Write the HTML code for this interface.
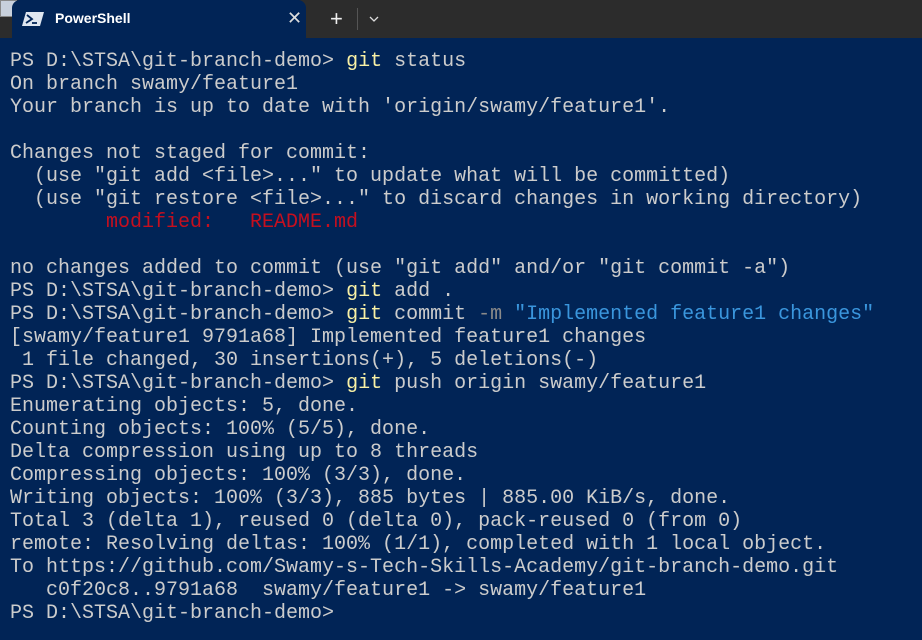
<!DOCTYPE html>
<html><head><style>
body{margin:0;width:922px;height:640px;background:#012456;overflow:hidden;position:relative;font-family:"Liberation Mono",monospace}
.bar{position:absolute;left:0;top:0;width:922px;height:38px;background:#2c2c2c}
.tab{position:absolute;left:12px;top:0;width:294px;height:38px;background:#012456;border-radius:8px 8px 0 0}
.tab span{position:absolute;left:43px;top:10px;font:bold 14px "Liberation Sans",sans-serif;color:#fff}
.x{position:absolute;left:275px;top:8px;color:#ddd;font:18px "Liberation Sans",sans-serif}
pre{position:absolute;left:10px;top:50px;margin:0;font-size:20px;line-height:23px;color:#cccccc;font-family:"Liberation Mono",monospace}
.y{color:#f9f1a5}.r{color:#c50f1f}.b{color:#3a96dd}.g{color:#8a8a8a}
</style></head><body>
<div class="bar"></div>
<div style="position:absolute;left:0;top:0;width:17px;height:17px;background:#c8d0dc;border:1px solid #888;box-sizing:border-box"></div>
<div class="tab">
<svg style="position:absolute;left:10px;top:12px" width="22" height="14" viewBox="0 0 22 14"><path d="M4 0H22L18 14H0Z" fill="#dfe6f0"/><path d="M5 3L10 7L4 11" stroke="#012456" stroke-width="1.8" fill="none"/><path d="M10 11H15" stroke="#012456" stroke-width="1.8"/></svg>
<span>PowerShell</span><div class="x">✕</div></div>
<div style="position:absolute;left:330px;top:6px;color:#eee;font:22px 'Liberation Sans',sans-serif">+</div>
<div style="position:absolute;left:357px;top:8px;width:1px;height:22px;background:#555"></div>
<svg style="position:absolute;left:369px;top:16px" width="10" height="6"><path d="M1 1L5 5L9 1" stroke="#ddd" stroke-width="1.3" fill="none"/></svg>
<pre>PS D:\STSA\git-branch-demo&gt; <span class="y">git</span> status
On branch swamy/feature1
Your branch is up to date with 'origin/swamy/feature1'.

Changes not staged for commit:
  (use "git add &lt;file&gt;..." to update what will be committed)
  (use "git restore &lt;file&gt;..." to discard changes in working directory)
        <span class="r">modified:   README.md</span>

no changes added to commit (use "git add" and/or "git commit -a")
PS D:\STSA\git-branch-demo&gt; <span class="y">git</span> add .
PS D:\STSA\git-branch-demo&gt; <span class="y">git</span> commit <span class="g">-m</span> <span class="b">"Implemented feature1 changes"</span>
[swamy/feature1 9791a68] Implemented feature1 changes
 1 file changed, 30 insertions(+), 5 deletions(-)
PS D:\STSA\git-branch-demo&gt; <span class="y">git</span> push origin swamy/feature1
Enumerating objects: 5, done.
Counting objects: 100% (5/5), done.
Delta compression using up to 8 threads
Compressing objects: 100% (3/3), done.
Writing objects: 100% (3/3), 885 bytes | 885.00 KiB/s, done.
Total 3 (delta 1), reused 0 (delta 0), pack-reused 0 (from 0)
remote: Resolving deltas: 100% (1/1), completed with 1 local object.
To https://github.com/Swamy-s-Tech-Skills-Academy/git-branch-demo.git
   c0f20c8..9791a68  swamy/feature1 -&gt; swamy/feature1
PS D:\STSA\git-branch-demo&gt; </pre>
</body></html>
